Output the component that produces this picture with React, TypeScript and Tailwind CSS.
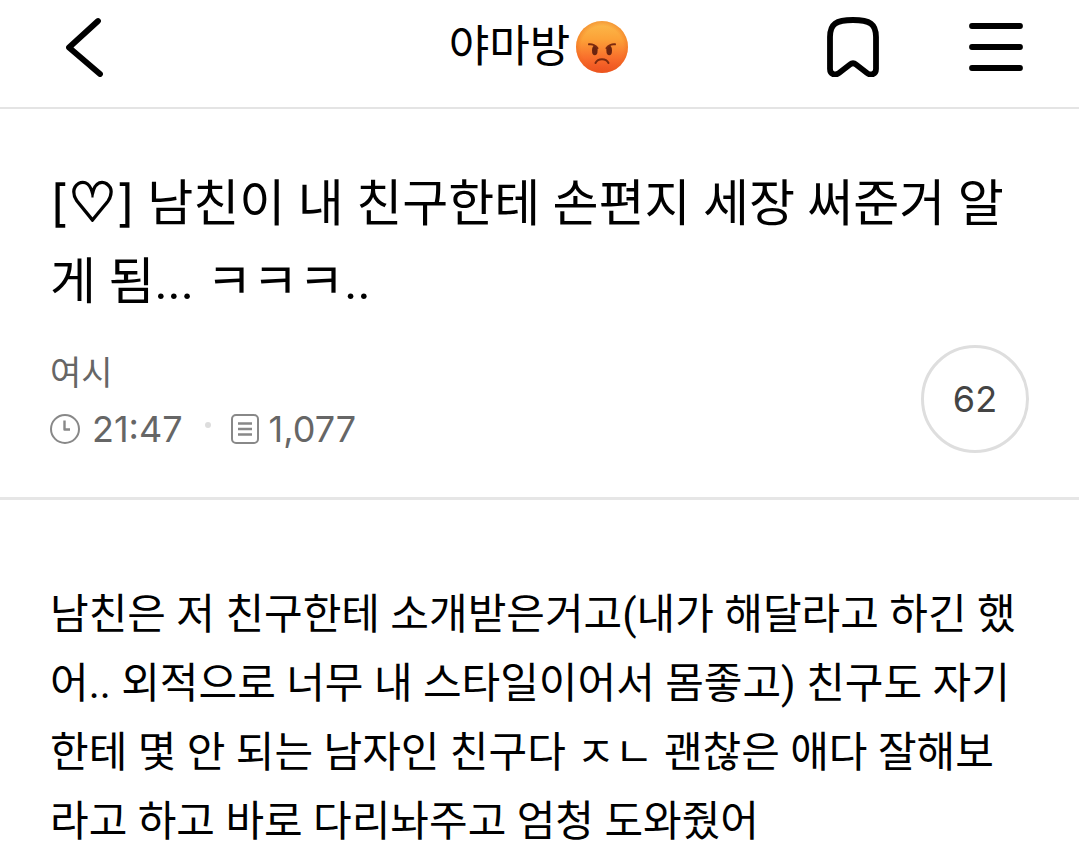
import type { SVGProps } from "react";

function BackIcon(props: SVGProps<SVGSVGElement>) {
  return (
    <svg viewBox="0 0 40 60" fill="none" stroke="currentColor" strokeWidth="5.8" strokeLinecap="round" strokeLinejoin="round" aria-hidden="true" {...props}>
      <path d="M34 4 5 30.5 36 57" />
    </svg>
  );
}

function BookmarkIcon(props: SVGProps<SVGSVGElement>) {
  return (
    <svg viewBox="0 0 52 60" fill="none" stroke="currentColor" strokeWidth="5.8" strokeLinejoin="round" aria-hidden="true" {...props}>
      <path d="M3 20C3 7 9 3 26 3s23 4 23 17v32c0 5-5 7-9 4L29 47.500c-2-1.700-4-1.700-6 0L12 56c-4 3-9 1-9-4z" />
    </svg>
  );
}

function MenuIcon(props: SVGProps<SVGSVGElement>) {
  return (
    <svg viewBox="0 0 54 48" fill="none" stroke="currentColor" strokeWidth="5.8" strokeLinecap="round" aria-hidden="true" {...props}>
      <path d="M3 3h48M3 24h48M3 45h48" />
    </svg>
  );
}

function AngryFace(props: SVGProps<SVGSVGElement>) {
  return (
    <svg viewBox="0 0 52 52" role="img" aria-label="화난 얼굴" {...props}>
      <defs>
        <linearGradient id="face" x1="0" y1="0" x2="0" y2="1">
          <stop offset="0" stopColor="#fbbb4c" />
          <stop offset="0.35" stopColor="#fca238" />
          <stop offset="0.7" stopColor="#f9702c" />
          <stop offset="1" stopColor="#ec4c20" />
        </linearGradient>
        <radialGradient id="shade" cx="0.5" cy="0.5" r="0.5">
          <stop offset="0.8" stopColor="#f26a1d" stopOpacity="0" />
          <stop offset="1" stopColor="#ea641a" stopOpacity="0.4" />
        </radialGradient>
      </defs>
      <circle cx="26" cy="26" r="26" fill="url(#face)" />
      <circle cx="26" cy="26" r="26" fill="url(#shade)" />
      <ellipse cx="18.8" cy="29.5" rx="2.800" ry="4.700" fill="#6b2410" />
      <ellipse cx="33.2" cy="29.5" rx="2.800" ry="4.700" fill="#6b2410" />
      <g fill="none" stroke="#7c2a0f" strokeWidth="2" strokeLinecap="round">
        <path d="M13 23.300c3-.3 7 1 8.500 4" />
        <path d="M39 23.300c-3-.3-7 1-8.500 4" />
        <path d="M19.500 42c2.500-5 10.500-5 13 0" />
      </g>
    </svg>
  );
}

function ClockIcon(props: SVGProps<SVGSVGElement>) {
  return (
    <svg viewBox="0 0 30 30" fill="none" stroke="currentColor" strokeWidth="2" aria-hidden="true" {...props}>
      <circle cx="15" cy="15" r="14" />
      <path d="M14.500 6.500V15.500H20" strokeWidth="2.400" strokeLinejoin="round" />
    </svg>
  );
}

function PostIcon(props: SVGProps<SVGSVGElement>) {
  return (
    <svg viewBox="0 0 28 30" fill="none" stroke="currentColor" strokeWidth="2" aria-hidden="true" {...props}>
      <rect x="1" y="1" width="26" height="28" rx="4" />
      <path d="M7 9.500h14M7 15h14M7 20.500h14" strokeWidth="2.400" />
    </svg>
  );
}

function TopBar() {
  return (
    <header className="grid grid-cols-[1fr_auto_1fr] items-center h-[109px] border-b-2 border-[#e4e4e4] pl-[54px] pr-14 pb-3.5">
      <button type="button" aria-label="뒤로" className="justify-self-start px-2.5">
        <BackIcon className="w-10 h-15" />
      </button>
      <h1 className="flex items-center gap-1.5 text-[44px] leading-[60px]">
        야마방
        <AngryFace className="w-[52px] h-[52px]" />
      </h1>
      <div className="flex items-center gap-[90px] justify-self-end">
        <button type="button" aria-label="북마크">
          <BookmarkIcon className="w-[52px] h-[60px]" />
        </button>
        <button type="button" aria-label="메뉴">
          <MenuIcon className="w-[54px] h-12" />
        </button>
      </div>
    </header>
  );
}

function PostHeader() {
  return (
    <section className="border-b-3 border-[#e6e6e6] px-[50px] pt-14 pb-10">
      <h2 className="text-[50px] leading-[78px] break-all">
        <span className="font-['Inter',sans-serif] leading-none">
          [<span className="font-['DejaVu_Sans',sans-serif] text-[54px] leading-none [-webkit-text-stroke:2px_#000]">♡</span>]
        </span>{" "}
        남친이 내 친구한테 손편지 세장 써준거 알게 됨... ㅋㅋㅋ..
      </h2>
      <div className="flex items-center justify-between mt-5">
        <div className="text-[#666]">
          <p className="font-['Noto_Sans_CJK_KR',sans-serif] text-[34px] leading-[60px]">여시</p>
          <div className="flex items-center font-['Inter','Noto_Sans_CJK_KR',sans-serif] text-[36px] leading-[56px]">
            <ClockIcon className="w-[30px] h-[30px] mr-3 text-[#888]" />
            <time>21:47</time>
            <span className="size-1.5 rounded-full bg-[#ddd] ml-[22px] mr-5 mb-2" />
            <PostIcon className="w-7 h-[30px] mr-2.5 text-[#888]" />
            <span>1,077</span>
          </div>
        </div>
        <button
          type="button"
          aria-label="댓글 62"
          className="size-[108px] rounded-full border-3 border-[#dedede] font-['Inter','Noto_Sans_CJK_KR',sans-serif] text-[36px] text-[#444]"
        >
          62
        </button>
      </div>
    </section>
  );
}

export default function App() {
  return (
    <main className="bg-white text-black font-['Roboto','Noto_Sans_CJK_KR',sans-serif]">
      <TopBar />
      <article>
        <PostHeader />
        <p className="pl-[50px] pr-14 pt-20 text-[42px] leading-[69px] break-all">
          남친은 저 친구한테 소개받은거고(내가 해달라고 하긴 했어.. 외적으로 너무 내 스타일이어서 몸좋고) 친구도 자기한테 몇 안 되는 남자인 친구다 ㅈㄴ 괜찮은 애다 잘해보라고 하고 바로 다리놔주고 엄청 도와줬어
        </p>
      </article>
    </main>
  );
}
